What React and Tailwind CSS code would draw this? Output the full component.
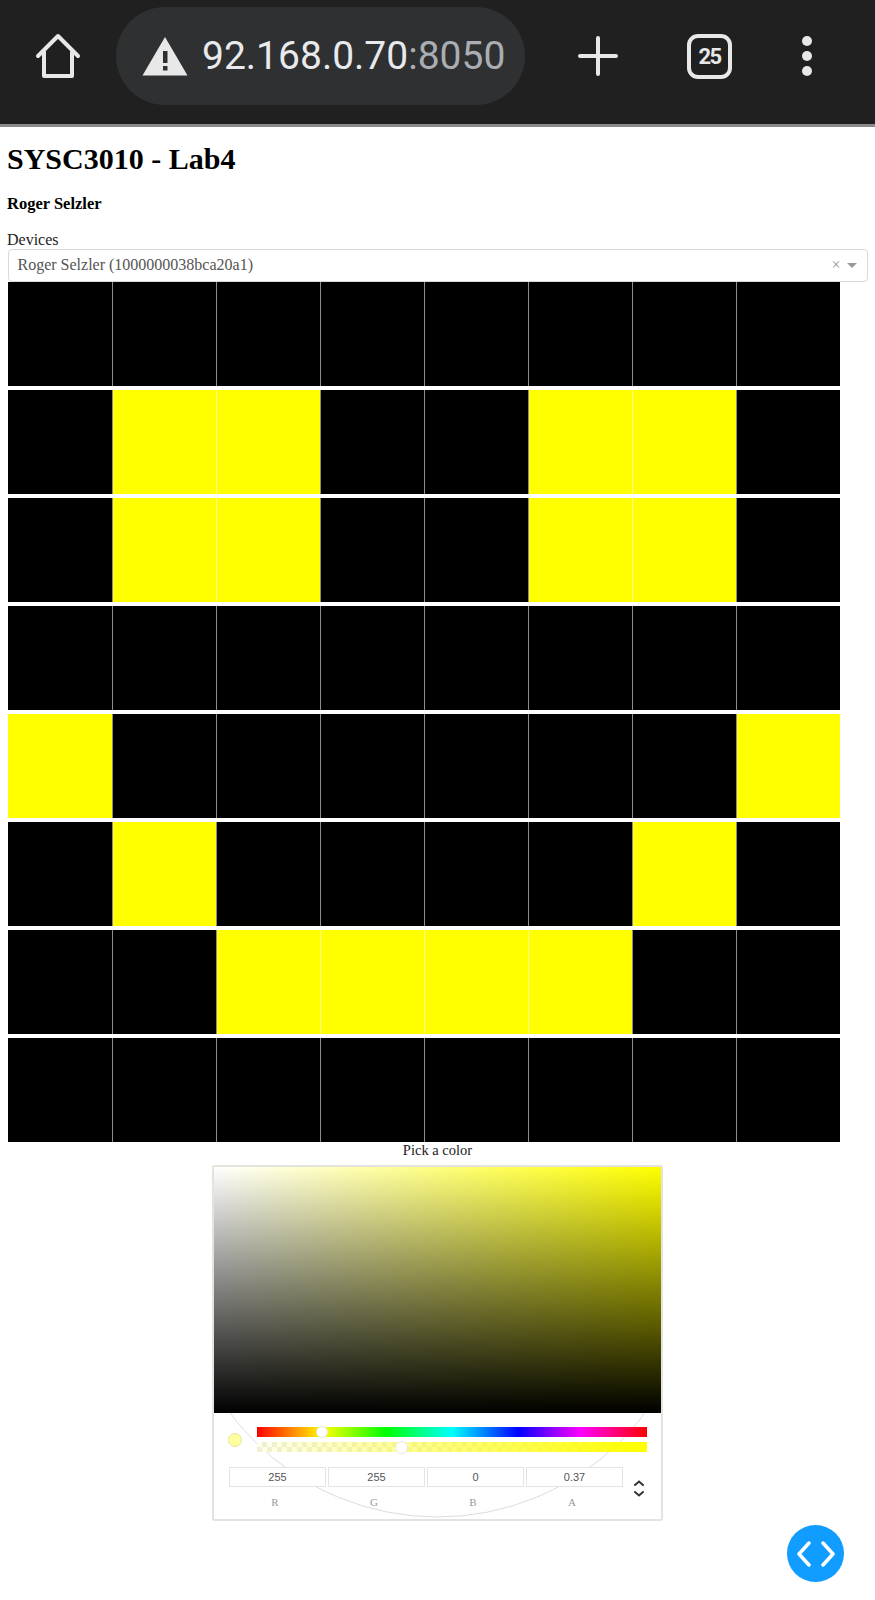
const LIT_CELLS = [
    [],
    [1, 2, 5, 6],
    [1, 2, 5, 6],
    [],
    [0, 7],
    [1, 6],
    [2, 3, 4, 5],
    [],
];

const RGBA_FIELDS = [
    { label: 'R', value: '255' },
    { label: 'G', value: '255' },
    { label: 'B', value: '0' },
    { label: 'A', value: '0.37' },
];

function BrowserBar() {
    return (
        <div className="flex h-[127px] items-start border-b-[3px] border-[#8a8a8a] bg-[#202020] font-['Roboto',sans-serif]">
            <svg className="ml-[35px] mt-[33px] h-[46px] w-[46px] shrink-0" viewBox="0 0 46 46" fill="none" stroke="#e8e8e8" strokeWidth="4" strokeLinejoin="round" strokeLinecap="round">
                <path d="M3 23 L23 3 L43 23 M9 19 V43 H37 V19" />
            </svg>
            <div className="ml-[35px] mt-[7px] flex h-[98px] w-[409px] shrink-0 items-center rounded-[49px] bg-[#2f3032] pl-[26px]">
                <svg className="h-[40px] w-[46px] shrink-0" viewBox="0 0 46 40">
                    <path d="M23 1 L45.500 39.500 H0.500 Z" fill="#e8e8e8" />
                    <rect x="21" y="15" width="4.500" height="12" fill="#2f3032" />
                    <rect x="21" y="30" width="4.500" height="4.500" fill="#2f3032" />
                </svg>
                <span className="ml-[14px] text-[39px] leading-none text-[#e8eaed]">
                    92.168.0.70<span className="text-[#aaaeb3]">:8050</span>
                </span>
            </div>
            <svg className="ml-[53px] mt-[36px] h-[40px] w-[40px] shrink-0" viewBox="0 0 40 40" stroke="#e8e8e8" strokeWidth="4" strokeLinecap="round">
                <path d="M20 2 V38 M2 20 H38" />
            </svg>
            <div className="ml-[69px] mt-[34px] flex h-[45px] w-[45px] shrink-0 items-center justify-center rounded-[11px] border-[4px] border-[#e8e8e8] text-[22px] font-bold tracking-[-1.500px] text-[#e8e8e8]">
                25
            </div>
            <div className="ml-[70px] mt-[36px] flex shrink-0 flex-col gap-[5px]">
                <div className="h-[10px] w-[10px] rounded-full bg-[#e8e8e8]" />
                <div className="h-[10px] w-[10px] rounded-full bg-[#e8e8e8]" />
                <div className="h-[10px] w-[10px] rounded-full bg-[#e8e8e8]" />
            </div>
        </div>
    );
}

function DeviceSelect() {
    return (
        <div className="flex h-[33px] w-[860px] items-center rounded-[4px] border border-[#d9d9d9] bg-white pb-[1px] pl-[9px] pr-[10px] text-[16px] text-[#555]">
            <span className="flex-1">Roger Selzler (1000000038bca20a1)</span>
            <span className="mr-[6px] text-[16px] leading-none text-[#999]">×</span>
            <span className="h-0 w-0 border-x-[5px] border-t-[5px] border-x-transparent border-t-[#999]" />
        </div>
    );
}

function LedGrid() {
    return (
        <div className="flex w-[832px] flex-col gap-[4px]">
            {LIT_CELLS.map((lit, row) => (
                <div key={row} className="flex h-[104px]">
                    {[0, 1, 2, 3, 4, 5, 6, 7].map((col) => (
                        <div
                            key={col}
                            className={`w-[104px] ${lit.includes(col) ? 'bg-[#ffff00]' : 'bg-black'} ${col > 0 ? (lit.includes(col) && lit.includes(col - 1) ? 'border-l border-[#fbfb90]' : 'border-l border-[#8c8c8c]') : ''}`}
                        />
                    ))}
                </div>
            ))}
        </div>
    );
}

function ColorPicker() {
    return (
        <div className="mx-auto mt-[7px] w-[451px] rounded-[2px] border-2 border-[#e4e4de] bg-white">
            <div className="h-[246px] bg-[linear-gradient(to_right,#fff,#ff0)]">
                <div className="h-full bg-[linear-gradient(to_bottom,transparent,#000)]" />
            </div>
            <div className="relative h-[106px] overflow-hidden">
                <svg className="absolute inset-0 h-full w-full" viewBox="0 0 447 106" fill="none" stroke="#dddddd" strokeWidth="1">
                    <circle cx="223.500" cy="-155" r="259" />
                </svg>
                <div className="relative flex pl-[14px] pt-[14px]">
                    <div className="mt-[6px] h-[14px] w-[14px] rounded-full border border-[#e6e6a0] bg-[#ffff9e]" />
                    <div className="ml-[15px] w-[390px]">
                        <div className="relative h-[10px] bg-[linear-gradient(to_right,#f00,#ff0_17%,#0f0_33%,#0ff_50%,#00f_67%,#f0f_83%,#f00)]">
                            <div className="absolute left-[59px] top-[-1px] h-[12px] w-[12px] rounded-full border border-[#e8e8e8] bg-white" />
                        </div>
                        <div className="relative mt-[5px] h-[10px] bg-[repeating-conic-gradient(#efefe6_0_25%,#fff_0_50%)] bg-size-[10px_10px]">
                            <div className="h-full bg-[linear-gradient(to_right,#ffff0010,#ff0)]" />
                            <div className="absolute left-[138px] top-[-1px] h-[13px] w-[13px] rounded-full border border-[#e8e8e8] bg-white" />
                        </div>
                    </div>
                </div>
                <div className="relative mt-[15px] flex pl-[15px]">
                    <div className="flex gap-[2px]">
                        {RGBA_FIELDS.map((field) => (
                            <div key={field.label} className="flex w-[97px] flex-col items-center">
                                <div className="flex h-[20px] w-full items-center justify-center border border-[#e4e4e4] bg-white font-['Liberation_Sans',sans-serif] text-[11px] text-[#555]">
                                    {field.value}
                                </div>
                                <div className="mt-[8px] pr-[5px] text-[11px] leading-[14px] text-[#999]">{field.label}</div>
                            </div>
                        ))}
                    </div>
                    <svg className="ml-[10px] mt-[13px] h-[17px] w-[12px]" viewBox="0 0 12 17" fill="none" stroke="#333" strokeWidth="2" strokeLinecap="round">
                        <path d="M2 5 L6 1.500 L10 5 M2 12 L6 15.500 L10 12" />
                    </svg>
                </div>
            </div>
        </div>
    );
}

export default function App() {
    return (
        <div className="relative h-[1600px] overflow-hidden bg-white font-['Liberation_Serif',serif] text-black">
            <BrowserBar />
            <div className="pl-[7.500px]">
                <h1 className="ml-[-0.500px] mt-[13px] text-[30px] font-bold leading-[38px]">SYSC3010 - Lab4</h1>
                <h6 className="ml-[-0.500px] mt-[16px] text-[16.500px] font-bold leading-[20px]">Roger Selzler</h6>
                <div className="ml-[-0.500px] mt-[16px] text-[16px] leading-[19px] text-[#222]">Devices</div>
                <DeviceSelect />
                <LedGrid />
            </div>
            <div className="text-center text-[14.500px] leading-[16px] text-[#222]">Pick a color</div>
            <ColorPicker />
            <div className="absolute left-[787px] top-[1525px] flex h-[57px] w-[57px] items-center justify-center rounded-full bg-[#119dff]">
                <svg className="h-[26px] w-[38px]" viewBox="0 0 38 26" fill="none" stroke="#fff" strokeWidth="3.500" strokeLinecap="round" strokeLinejoin="round">
                    <path d="M12 2 L2 13 L12 24 M26 2 L36 13 L26 24" />
                </svg>
            </div>
        </div>
    );
}
